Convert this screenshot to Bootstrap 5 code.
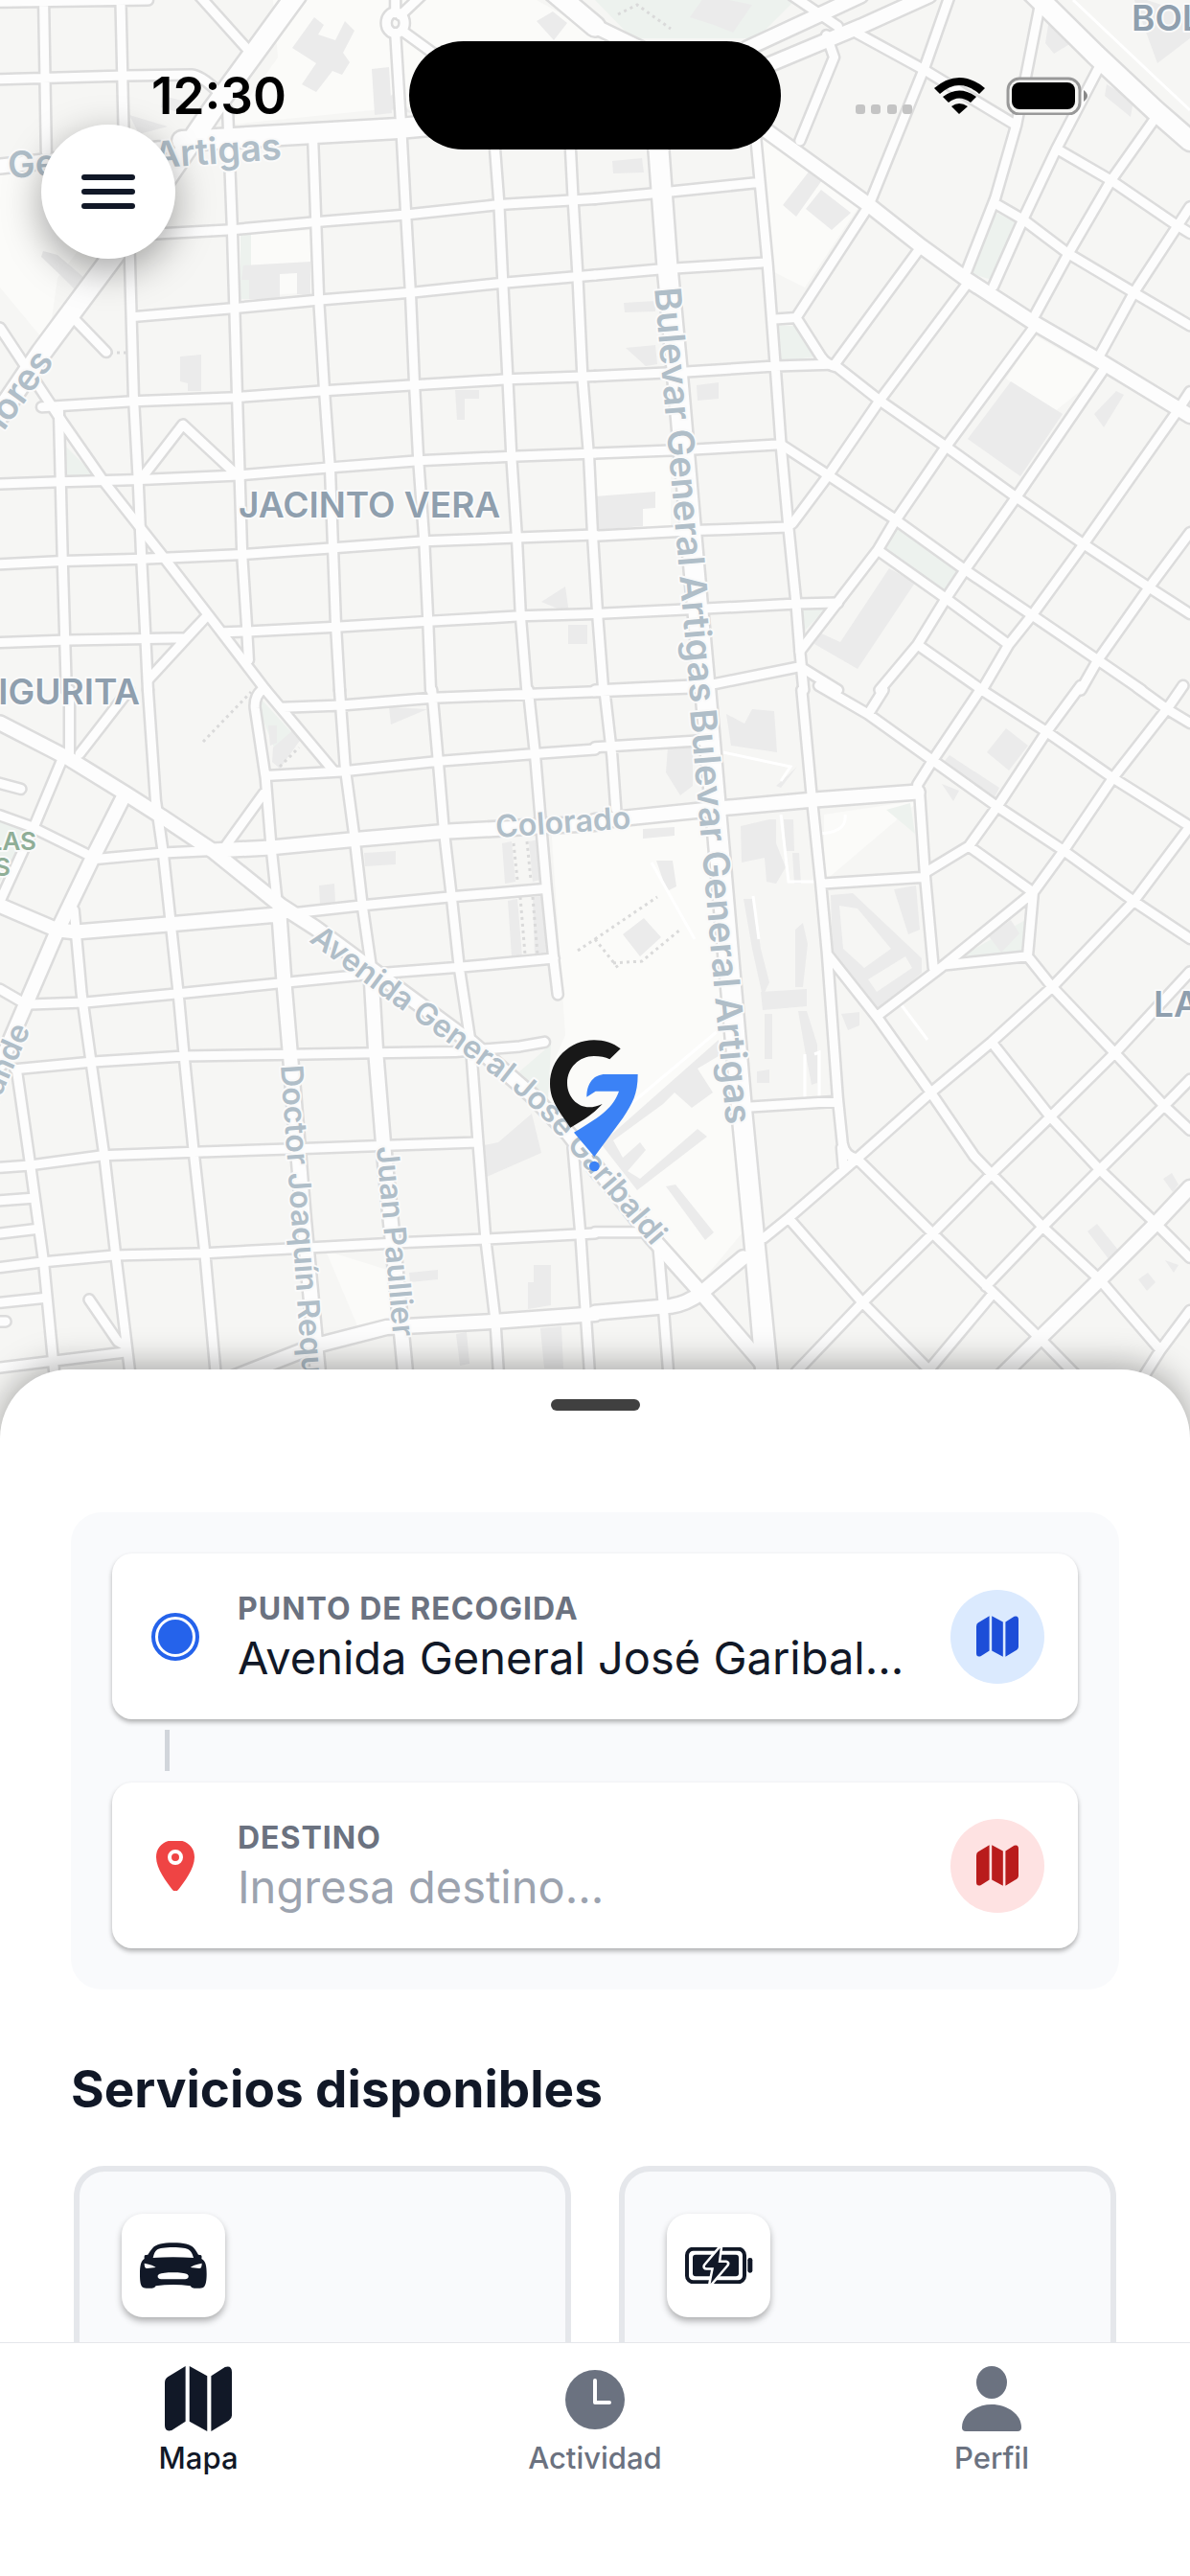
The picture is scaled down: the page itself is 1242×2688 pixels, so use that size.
<!DOCTYPE html>
<html lang="es">
<head>
<meta charset="utf-8">
<meta name="viewport" content="width=device-width, initial-scale=1">
<title>Mapa</title>
<link href="https://cdn.jsdelivr.net/npm/bootstrap@5.3.0/dist/css/bootstrap.min.css" rel="stylesheet">
<style>
  body { font-family: Inter, "Liberation Sans", sans-serif; color: #111827; }
  .map-area { height: 1500px; background: #f6f6f4; }
  .map-svg { width: 100%; height: 100%; display: block; }
  #net { --w: 9px; fill: none; stroke-linecap: round; stroke-linejoin: round; }
  #net path, #net circle { vector-effect: non-scaling-stroke; stroke-width: calc(var(--w) + var(--edge)); }
  #net .mid { --w: 14px; }
  #net .wide { --w: 20px; }
  .casing { stroke: #dcdcdc; --edge: 5px; }
  .paving { stroke: #fdfdfd; --edge: 0px; }
  .shape-light path { fill: #fbfbf9; }
  .shape-park path { fill: #edf2ee; }
  .shape-built path { fill: #ebebeb; }
  .lanes path { fill: none; stroke: #ffffff; stroke-width: 3px; }
  .dots path { fill: none; stroke: #dadada; stroke-width: 3px; stroke-dasharray: 3 4; }
  .map-svg text { font-weight: 600; font-size: 32px; fill: #b0bec8; stroke: #fafafa; stroke-width: 4px; paint-order: stroke; stroke-linejoin: round; }
  .map-svg text.avenue { font-size: 38px; }
  .map-svg text.hood { fill: #8f9fae; font-size: 37px; }
  .map-svg text.green { fill: #8fae97; font-size: 26px; }
  .status { top: 0; left: 0; right: 0; padding-top: 43px; }
  .status-time { font-size: 53px; line-height: 64px; font-weight: 600; color: #000; margin-left: 30px; }
  .status-icons { margin-right: 30px; }
  .island { width: 388px; height: 113px; border-radius: 57px; background: #000; }
  .menu-btn { top: 130px; left: 43px; width: 140px; height: 140px; box-shadow: 0 12px 40px rgba(0,0,0,.36); }
  .sheet { margin-top: -71px; border-radius: 72px 72px 0 0; padding: 31px 74px 0; box-shadow: 0 -4px 36px rgba(0,0,0,.34); }
  .grip { width: 93px; height: 12px; border-radius: 6px; background: #404040; }
  .route { background: #f9fafc; border-radius: 32px; padding: 43px; margin-top: 106px; }
  .stop-card { height: 173px; border-radius: 21px; padding: 0 35px 0 40px; box-shadow: 0 3px 5px rgba(0,0,0,.3); }
  .stop-mark { width: 52px; height: 52px; }
  .stop-label { font-size: 32px; line-height: 40px; font-weight: 700; color: #6b7280; letter-spacing: 1px; }
  .stop-input { border: 0; outline: 0; padding: 0; width: 100%; font-size: 47px; line-height: 62px; height: 62px; color: #111827; background: transparent; text-overflow: ellipsis; }
  .stop-input::placeholder { color: #9ca3af; opacity: 1; }
  .stop-text { margin: 0 35px 0 39px; padding-top: 4px; }
  .pick { width: 98px; height: 98px; }
  .pick-blue { background: #dbeafe; color: #1d4ed8; }
  .pick-red { background: #fee2e2; color: #b91c1c; }
  .link-bar { width: 5px; height: 43px; background: #d1d5db; margin: 11px 0 12px 55px; }
  .section-title { font-size: 53px; line-height: 64px; font-weight: 700; margin: 72px 0 0; }
  .services { gap: 50px; margin: 48px 3px 0; }
  .service { border: 6px solid #e5e7eb; border-radius: 32px; background: #f9fafc; padding: 44px; height: 400px; }
  .tile { width: 108px; height: 108px; border-radius: 22px; box-shadow: 0 4px 7px rgba(0,0,0,.3); }
  .tabs { height: 244px; border-top: 1px solid #e5e7eb; padding-top: 24px; }
  .tab-item { color: #6b7280; font-size: 31px; line-height: 36px; font-weight: 500; gap: 10px; }
  .tab-item.active { color: #111827; }
</style>
</head>
<body class="vh-100 d-flex flex-column overflow-hidden bg-white">
<svg width="0" height="0" class="position-absolute" aria-hidden="true">
  <symbol id="i-map" viewBox="0 0 68 66"><path fill="currentColor" d="M0 17Q0 13 3 11L21 0V56L7 65Q0 67 0 60ZM25 0L43 10V66L25 56ZM47 10L61 1Q68-1 68 6V50Q68 53 65 55L47 66Z"/></symbol>
</svg>
<main class="flex-grow-1 overflow-hidden position-relative">
  <section class="map-area" aria-label="Mapa">
    <svg class="map-svg" viewBox="0 0 1242 1500" preserveAspectRatio="xMidYMin slice">
      <defs>
        <g id="net">
          <g transform="scale(.39605 .45918)">
            <path d="M0 5L390 0M0 180L330 172L505 170Q530 172 570 205M115 0L122 345M318 0L326 300L342 590L352 900L364 1090L373 1270L383 1440L390 1568M600 250L612 520L625 900L638 1260L650 1420L655 1500M825 320L840 680L855 890L870 1070L885 1420L895 1568M1042 0V30M1042 75L1058 300L1070 490L1082 670L1092 870L1103 1050L1118 1230L1128 1410L1135 1568M1300 290L1315 460L1325 640L1338 860L1348 1040L1362 1220L1372 1400L1388 1568M1500 280L1510 450L1522 620L1535 860L1552 1040L1562 1220L1575 1400L1590 1568M155 930L165 1280L175 1568"/>
            <path d="M400 532L612 522L825 505L1070 488L1315 465L1568 452M350 720L620 700L835 682L1082 665L1325 643L1568 625M110 925L350 912L620 903L855 888L1092 875L1338 862L1568 855M0 1100L160 1095L370 1090L630 1080L865 1063L1103 1047L1348 1037L1568 1030M0 1282L165 1275L375 1270L640 1260L880 1245L1118 1230L1362 1222L1568 1215M0 1460L180 1455L490 1450L545 1400L390 1545M590 1437L650 1435L885 1425L1128 1412L1372 1400L1568 1395"/>
            <path d="M525 -10L650 110M0 745L165 960L270 1090L430 1265L560 1410L700 1568M185 715L280 800M370 1090L482 965L625 1080M1055 35L1110 -10M1060 70L1140 120"/>
            <circle cx="1042" cy="52" r="24"/>
            <g class="mid"><path d="M0 378L420 338"/></g>
            <g class="wide"><path d="M780 -10L560 250L300 580L110 800L0 940M480 320L1050 292L1568 250M1430 -40L1568 60"/></g>
          </g>
          <g transform="translate(621) scale(.39605 .45918)">
            <path d="M420 280L455 600L475 830L490 1010L510 1200L530 1370L540 1480L550 1568M0 452L150 440L430 415M0 625L170 612L440 597M0 855L240 845L475 832L620 828M0 1030L250 1022L490 1010M0 1218L280 1205L510 1198M0 1395L290 1383L530 1372L640 1370M0 1568L310 1555L540 1515"/>
            <path d="M475 725L530 722L720 470L870 150L935 -10M530 722L595 810Q610 830 640 835L750 910L925 1015L1110 1130L1285 1235L1460 1335L1568 1395M630 830L860 560M520 1190L615 1080L750 910L985 640M490 1010L615 1080L790 1180L975 1295L1155 1400L1325 1500L1440 1568M540 1480L745 1250L790 1185L925 1015L1160 740M745 1250L925 1360L1090 1465M750 1568L850 1465L925 1360L975 1295L1110 1130L1340 840M850 1465L1020 1568L1090 1465L1150 1400L1285 1240L1530 940L1568 890M1280 1568L1325 1500L1460 1335L1568 1210M550 1520L640 1568"/>
            <path d="M1160 715L1245 580L1360 410L1475 270M1325 815L1420 665L1530 520L1568 470M980 615L1055 450L1110 285L1175 0M1050 650L1130 495L1215 340L1330 150M1060 465L1130 500L1245 575L1420 665L1568 740M1220 340L1360 410L1530 510L1568 530M690 75L870 160L1110 285M540 320L630 130L610 80M520 -10L640 60"/>
            <g class="mid"><path d="M0 60L120 110L440 290L720 465L860 560L980 635L1150 730L1330 820L1530 925L1568 945M400 110L600 30L700 -10M450 150L700 60L880 -10"/></g>
            <g class="wide"><path d="M160 250L190 600L215 830L240 1080L262 1300L290 1568M1150 -20L1320 125L1475 250L1568 320"/></g>
          </g>
          <g transform="translate(0 720) scale(.39605 .45918)">
            <path d="M183 0V150M340 0L210 145M390 0L410 250L430 370L450 530L470 690L485 830L510 1045L540 1280L570 1568M690 0Q670 15 672 40L700 200L715 360L730 480M700 0L880 185M745 40L900 35L1140 18L1568 4M700 195L900 185L1155 162L1410 145L1568 135M695 235L590 360M895 0L910 180L935 340L955 490L980 640M1138 0L1155 165L1170 320L1190 470L1210 630L1240 800L1260 1030L1280 1250L1305 1430L1315 1568M1392 0L1410 145L1425 300L1440 450L1460 620L1470 692M740 510L950 490L1190 470L1435 452M60 715L225 710L470 690L750 665L980 645L1210 630L1460 610M40 862L245 845L485 832L770 828L990 825L1200 822L1370 810L1435 800M0 1085L80 1080L270 1058L510 1050L800 1042L1020 1035L1260 1028M0 1312L110 1300L300 1285L540 1280L800 1268L1080 1255L1280 1248L1568 1235M0 1160L85 1155M0 1235L95 1225M0 1392L115 1382M0 1435H15M0 1540L330 1505"/>
            <path d="M165 155L90 310L0 480M0 285L80 310L245 380M245 385L430 370L560 365M195 500L215 690L240 845L275 1060L305 1285L345 1568M0 680L60 710M45 870L80 1080L115 1300L145 1568M-10 210L55 225M235 1385L310 1480L330 1490M1510 1040L1530 1240L1555 1568"/>
            <g class="mid"><path d="M0 75L180 155L330 235L430 290L560 365L740 490L830 540L1020 660L1240 800L1400 920L1500 1010L1580 1100M330 235L245 380L150 550L70 710L0 850M0 490L150 545L200 550L450 532L740 510M735 500L750 680L765 830L800 1200L840 1568M978 640L990 820L1010 1030L1070 1568M560 365L715 358L930 340L1170 322L1568 303M600 1568L830 1490L1020 1448L1300 1435L1568 1418"/></g>
          </g>
          <g transform="translate(621 720) scale(.39605 .45918)">
            <path d="M0 130L280 115M0 4L270 -5M25 0L45 150L55 270M545 0L572 250L595 440L612 600L640 930L652 1030Q658 1060 690 1065L655 1090L650 1040M600 440L870 425M400 948L640 935M855 232L870 425L892 632M870 415L985 355L1060 265L1190 95L1280 -10M850 232V215L890 160L1015 0M590 -10L720 55L890 160L1060 265L1235 365L1420 480L1568 565M720 55L760 0M1010 -5L1190 95L1365 200L1568 310M985 355L1155 460L1235 365L1365 200L1510 40L1550 -10M1430 -5L1510 45L1568 75M1155 460L920 625L745 740M1155 460L1140 605L920 625M612 600L745 745L885 915L1000 1060L1045 1100L1180 1220L1330 1340L1490 1500L1568 1410M1140 605L1205 675L1370 825L1500 945L1568 1000M1568 310L1420 480L1205 675L1045 800L885 915L690 1065L510 1200L445 1245M1045 800L1200 970L1330 1090L1475 1210L1568 1290M1568 640L1370 825L1200 970L1045 1100L890 1235L705 1392L530 1550M690 1065L890 1235L1050 1370L1180 1480L1280 1568M510 1200L705 1392L880 1545L1050 1370M1568 885L1500 945L1330 1090L1180 1220L1030 1355M1490 1500L1440 1568M165 1250L180 1400L195 1568M0 1232H120"/>
            <g class="mid"><path d="M-10 1070L150 1245L280 1370L450 1540M0 1415L200 1400Q240 1395 280 1370L390 1290M1568 1130L1475 1215L1330 1340L1170 1475L1060 1568M0 298L340 268L570 250L850 232"/></g>
            <g class="wide"><path d="M291 0L318 270L338 470L363 720L386 950L422 1270L455 1600M422 1270L460 1600"/></g>
          </g>
        </g>
      </defs>
      <g class="shape-light">
        <path d="M285 0H560L640 45L540 100L240 130L290 60ZM790 135L900 210L840 300L800 280ZM0 180L150 170L60 290L50 360L0 300ZM250 245L325 240V305L250 310ZM620 480L700 475V560L620 560ZM575 860L760 850L780 1280L730 1340L670 1270L560 1150L590 1080ZM340 1305L420 1330V1390L380 1400ZM860 850L960 835L860 920ZM1080 350L1150 390L1100 430L1050 395Z"/>
      </g>
      <g class="shape-park">
        <path d="M621 0H830L790 40H660ZM1013 285L1036 220L1060 232L1038 293ZM808 340H834L853 372L814 377ZM933 550L1000 595L985 617L920 573ZM836 636L862 635L838 660ZM251 244H262V312H251ZM68 465L100 497L70 496ZM273 730L305 765L290 790L272 745ZM0 850L28 870L0 920ZM540 1120L575 1090L572 1150ZM925 845L950 838L955 870ZM1005 997L1070 960V1000Z"/>
      </g>
      <g class="shape-built">
        <path d="M305 50L328 18L338 26L332 36L350 42L360 22L370 32L358 55L365 65L357 78L347 74L330 96L315 88L330 66ZM388 72L406 70L409 118L391 120ZM720 18L736 -5L785 5L765 34L745 26ZM817 214L845 178L858 188L831 226ZM841 218L857 198L888 222L868 240ZM1010 458L1055 398L1109 432L1065 497ZM1142 432L1165 408L1173 412L1152 446ZM855 660L877 670L928 593L955 608L895 698L850 672ZM254 277L324 273V308L310 307V285L292 286V312L260 312V292H252ZM188 372L210 370V408H196V400L188 398ZM475 407H500V416H485V438H477ZM565 628L590 612L594 640ZM593 652H613V672H593ZM727 402L750 399V416L728 418ZM621 518L684 513V530L671 531V549L621 553ZM651 316L684 314V325L652 326ZM653 363L684 360L686 380L674 382ZM639 168L670 165L672 180L640 181ZM1182 -5L1242 15V40L1208 66ZM1095 20L1118 45L1100 56L1091 45ZM1155 88L1183 105L1180 122L1153 100ZM560 22L577 12L592 24L578 42ZM45 262L60 266L88 290L78 302L63 287L43 268ZM135 120L175 132L145 140ZM395 112L410 98L430 118ZM170 100L190 105V118L168 112Z"/>
        <path d="M285 780L308 760L315 770L292 802L284 795ZM280 757H289V775L282 778ZM406 738L446 740L408 756ZM380 890L413 888V902L381 904ZM333 924L349 922L350 942L334 943ZM524 880L534 878L538 920L527 922ZM552 878L562 876L564 918L556 920ZM530 940L540 938L545 998L534 998ZM556 936L567 935L570 996L558 998ZM505 1195L520 1192L555 1162L565 1203L508 1228ZM427 1328L457 1325V1335L428 1338ZM557 1320H575V1362L551 1366V1338H557ZM564 1386L586 1384L588 1428H568ZM476 1392L487 1390L490 1423L480 1425Z"/>
        <path d="M758 745L777 755L785 740L808 742L811 785L763 778ZM697 780L723 778V820L710 830L695 806ZM810 820L832 800L815 822ZM773 862L803 855L810 855V880L820 905L810 922L800 920L798 895L774 900ZM818 855L828 855L829 888L820 888ZM827 890L834 890L836 922L829 922ZM776 938H787L794 990L803 1025L796 1040L785 990ZM830 970L838 963L843 985L838 1030L830 1030ZM794 1035L842 1032V1050L796 1054ZM798 1058H806V1105L798 1105ZM833 1055H842L853 1090V1130L847 1132L840 1095ZM650 975L672 958L690 978L668 998ZM671 865L704 863V872L671 875ZM685 898L702 898L706 925L696 930ZM695 1238L705 1236L745 1286L736 1294ZM626 1192L638 1184L750 1085V1102L728 1115L744 1140L722 1156L704 1140L692 1152L640 1190L650 1208L668 1192L674 1200L655 1222L668 1230L728 1178L738 1186L665 1242ZM878 1058L897 1056V1070L885 1075ZM790 1118L803 1116V1130H790ZM1030 785L1050 760L1073 778L1053 804ZM985 795L991 788L1043 822L1038 832ZM983 818L1001 825L995 836ZM1032 977L1055 960L1064 974L1045 994ZM1135 1285L1145 1277L1170 1308L1158 1315ZM1188 1335L1198 1328L1206 1338L1197 1347ZM1216 1315L1230 1320L1225 1328ZM1214 1230L1223 1224L1230 1236L1224 1244Z"/>
        <path fill-rule="evenodd" d="M867 934L890 932L962 1000V1015L915 1055L869 1000ZM876 945L880 990L902 1010L930 990L895 948ZM906 1022L915 1035L952 1010L945 998ZM933 928L956 924L960 970L948 975Z"/>
      </g>
      <g class="lanes"><path d="M755 785L825 800L815 815M815 850L823 920H850M786 935L792 980M680 900L725 980M850 870Q885 870 882 850M938 1045L968 1085M850 1100L855 1098V1145M840 1145V1100M625 1180L750 1075M1120 0L1210 85L1242 115"/></g>
      <g class="dots"><path d="M212 774L262 722M621 980L686 936M621 980L645 1010M640 1005L670 1003L710 970M603 992L621 980M536 880L540 918M550 878L554 918M543 936L548 996M556 936L561 996M645 15L665 5L700 30M292 800L312 780M115 368H134"/></g>
      <use href="#net" class="casing"/>
      <use href="#net" class="paving"/>
      <path id="gari" fill="none" d="M322 982L400 1040L515 1122Q560 1155 590 1194L704 1328"/>
      <text class="avenue" transform="translate(9 186) rotate(-4)">General Artigas</text>
      <text class="avenue" transform="translate(683 301) rotate(85)">Bulevar General Artigas</text>
      <text class="avenue" transform="translate(720 741) rotate(85)">Bulevar General Artigas</text>
      <text transform="translate(518 874) rotate(-4)">Colorado</text>
      <text><textPath href="#gari">Avenida General Jose Garibaldi</textPath></text>
      <text transform="translate(293 1112) rotate(86)">Doctor Joaquín Requena</text>
      <text transform="translate(393 1197) rotate(85)">Juan Paullier</text>
      <text class="avenue" transform="translate(57 377) rotate(-54)" text-anchor="end">Flores</text>
      <text transform="translate(32 1074) rotate(-66)" text-anchor="end">Rio Grande</text>
      <text class="hood" x="249" y="540">JACINTO VERA</text>
      <text class="hood" x="146" y="735" text-anchor="end">LA FIGURITA</text>
      <text class="hood" x="1181" y="32">BOLÍVAR</text>
      <text class="hood" x="1204" y="1061">LA BLANQUEADA</text>
      <text class="green" x="38" y="887" text-anchor="end">LAS</text>
      <text class="green" x="11" y="914" text-anchor="end">S</text>
      <g transform="translate(560 1075) scale(.33333)">
        <path fill="#181818" d="M263 58C240 40 212 31 180 31C103 31 42 92 42 168C42 225 78 262 106 305L150 278C175 262 190 248 206 231C190 238 178 241 165 241C127 241 96 208 96 165C96 118 133 81 180 81C199 81 215 84 229 91Z"/>
        <path fill="#3b82f6" d="M317 138H215C180 138 157 165 157 209L185 191H258C240 240 210 265 117 320L181 396L270 275C300 230 317 200 317 138Z"/>
        <circle cx="181" cy="426" r="16" fill="#3b82f6"/>
      </g>
    </svg>
  </section>

  <header class="status position-absolute d-flex align-items-center">
    <div class="col d-flex justify-content-center"><span class="status-time">12:30</span></div>
    <div class="island"></div>
    <div class="col d-flex justify-content-center">
      <svg class="status-icons" width="244" height="40" viewBox="890 80 244 40" aria-hidden="true">
        <g fill="#c4c4c4"><rect x="891" y="109" width="10" height="10" rx="3"/><rect x="907" y="109" width="10" height="10" rx="3"/><rect x="924" y="109" width="10" height="10" rx="3"/><rect x="940" y="109" width="10" height="10" rx="3"/></g>
        <path d="M973 92Q999 70 1026 92L1020 98Q999 80 979 98ZM982 101Q999 88 1017 101L1011 107Q999 98 988 107ZM991 111Q999 105 1008 111L999 119Z"/>
        <rect x="1050" y="82" width="75" height="37" rx="12" fill="#f6f6f4" stroke="#999" stroke-width="3"/>
        <rect x="1054" y="86" width="66" height="28" rx="8"/>
        <path fill="#888" d="M1129 94Q1133 97 1133 100T1129 106Z"/>
      </svg>
    </div>
  </header>
  <button type="button" class="menu-btn btn btn-light bg-white border-0 rounded-circle position-absolute d-flex align-items-center justify-content-center p-0" aria-label="Menú">
    <svg width="56" height="38" viewBox="0 0 56 38"><path d="M3 4H53M3 19H53M3 34H53" stroke="#111827" stroke-width="6" stroke-linecap="round"/></svg>
  </button>

  <section class="sheet bg-white position-relative">
    <div class="grip mx-auto"></div>
    <form class="route">
      <div class="stop-card bg-white d-flex align-items-center">
        <svg class="stop-mark flex-shrink-0" viewBox="0 0 52 52"><circle cx="26" cy="26" r="23" fill="none" stroke="#2563eb" stroke-width="4"/><circle cx="26" cy="26" r="18" fill="#2563eb"/></svg>
        <div class="stop-text flex-grow-1 d-flex flex-column">
          <label class="stop-label" for="from">PUNTO DE RECOGIDA</label>
          <input class="stop-input" id="from" type="text" value="Avenida General José Garibal...">
        </div>
        <button type="button" class="pick pick-blue btn rounded-circle border-0 p-0 d-flex align-items-center justify-content-center flex-shrink-0" aria-label="Elegir recogida en el mapa"><svg width="44" height="43"><use href="#i-map"/></svg></button>
      </div>
      <div class="link-bar"></div>
      <div class="stop-card bg-white d-flex align-items-center">
        <svg class="stop-mark flex-shrink-0" viewBox="0 0 52 52"><path fill="#ef4444" d="M26-1C14-1 6 6 6 17C6 29 17 43 23 51Q26 54 29 51C35 43 46 29 46 17C46 6 38-1 26-1Z"/><circle cx="26" cy="17" r="6" fill="none" stroke="#fff" stroke-width="4"/></svg>
        <div class="stop-text flex-grow-1 d-flex flex-column">
          <label class="stop-label" for="to">DESTINO</label>
          <input class="stop-input" id="to" type="text" placeholder="Ingresa destino...">
        </div>
        <button type="button" class="pick pick-red btn rounded-circle border-0 p-0 d-flex align-items-center justify-content-center flex-shrink-0" aria-label="Elegir destino en el mapa"><svg width="44" height="43"><use href="#i-map"/></svg></button>
      </div>
    </form>
    <h2 class="section-title">Servicios disponibles</h2>
    <div class="services d-flex">
      <article class="service col" aria-label="Auto">
        <div class="tile bg-white d-flex align-items-center justify-content-center">
          <svg width="70" height="48" viewBox="77 108 210 142"><path fill="#111827" fill-rule="evenodd" d="M181 108C215 108 235 113 246 124C252 131 256 138 260 145L269 147Q272 150 270 158C283 165 286 180 286 205C286 225 284 238 278 246Q275 250 265 250H247Q238 250 235 243Q181 235 127 243Q124 250 115 250H97Q87 250 84 246C78 238 77 225 77 205C77 180 80 165 91 158Q90 150 92 147L102 145C106 138 111 131 117 124C128 113 148 108 181 108ZM181 122C155 122 138 125 130 130Q122 136 118 155Q181 151 245 155Q240 136 231 130C223 125 207 122 181 122ZM91 172Q91 190 100 188L127 185Q120 178 91 172ZM271 172Q271 190 262 188L235 185Q242 178 271 172ZM181 201C160 201 145 203 137 206Q131 210 133 216Q136 222 143 222H219Q226 222 229 216Q231 210 225 206C217 203 202 201 181 201Z"/></svg>
        </div>
      </article>
      <article class="service col" aria-label="Auto eléctrico">
        <div class="tile bg-white d-flex align-items-center justify-content-center">
          <svg width="71" height="38" viewBox="70 123 213 114"><rect x="76" y="128" width="180" height="104" rx="20" fill="none" stroke="#111827" stroke-width="12"/><rect x="94" y="146" width="144" height="68" rx="9" fill="#111827"/><path fill="#111827" stroke="#fff" stroke-width="15" paint-order="stroke" stroke-linejoin="round" d="M180 125L133 181Q131 187 137 187H160L150 237L201 177Q204 172 198 171H174Z"/><rect x="266" y="156" width="15" height="47" rx="7" fill="#111827"/></svg>
        </div>
      </article>
    </div>
  </section>
</main>
<nav class="tabs bg-white d-flex flex-shrink-0 align-items-start position-relative">
  <a href="#mapa" class="tab-item active col d-flex flex-column align-items-center text-decoration-none" aria-current="page"><svg width="70" height="68"><use href="#i-map"/></svg>Mapa</a>
  <a href="#actividad" class="tab-item col d-flex flex-column align-items-center text-decoration-none"><svg width="68" height="68" viewBox="0 0 68 68"><circle cx="34" cy="35" r="31" fill="currentColor"/><path d="M34 15V38H49" fill="none" stroke="#fff" stroke-width="4" stroke-linecap="round" stroke-linejoin="round"/></svg>Actividad</a>
  <a href="#perfil" class="tab-item col d-flex flex-column align-items-center text-decoration-none"><svg width="68" height="68" viewBox="0 0 68 68"><ellipse cx="34" cy="17" rx="16" ry="17" fill="currentColor"/><path fill="currentColor" d="M34 40C50 40 65 50 65 64Q65 68 61 68H7Q3 68 3 64C3 50 18 40 34 40Z"/></svg>Perfil</a>
</nav>
<script src="https://cdn.jsdelivr.net/npm/bootstrap@5.3.0/dist/js/bootstrap.bundle.min.js"></script>
</body>
</html>
